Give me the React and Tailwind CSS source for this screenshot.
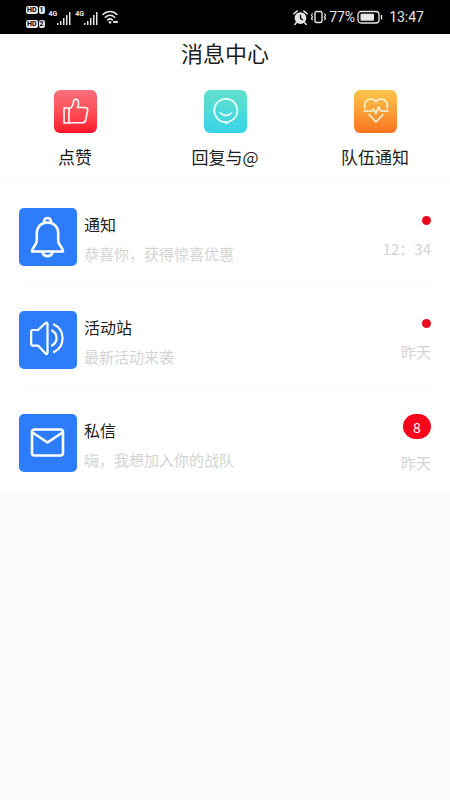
const ThumbIcon = () => (
  <svg viewBox="0 0 43 43" className="size-full" fill="none" stroke="#fff" strokeWidth="1.6" strokeLinejoin="round" strokeLinecap="round">
    <path d="M10 18h5v15h-5z" />
    <path d="M15 19c3-1.500 4.300-4 4.500-7.500c.1-3 4.600-3.200 5 .8c.2 2-.3 3.800-.9 5.200h7.200c2.200 0 3.200 1.300 2.800 3.200l-1.900 9.300c-.4 1.800-1.500 2.800-3.300 2.800H15" />
  </svg>
);

const SmileIcon = () => (
  <svg viewBox="0 0 43 43" className="size-full" fill="none" stroke="#e9fffd" strokeWidth="1.8" strokeLinejoin="round" strokeLinecap="round">
    <path d="M22 32a11.500 11.500 0 1 1 3.500-.6l-3.500 2.200z" />
    <path d="M16.500 23c3 3.200 8 3.200 11 0" />
  </svg>
);

const HeartIcon = () => (
  <svg viewBox="0 0 43 43" className="size-full" fill="none" stroke="#fff6dc" strokeWidth="1.6" strokeLinejoin="round" strokeLinecap="round">
    <path d="M11 18c-1.500-5 1.800-9 5.700-9c2.300 0 4.200 1 5.300 2.800c1.100-1.800 3-2.800 5.300-2.800c4 0 7.200 4 5.700 9" />
    <path d="M10 21h8l1.500-2l2.500 4.500l2.500-6.500l2 4h7.500" />
    <path d="M15 24.500l7 7.500l7-7.500" />
  </svg>
);

const BellIcon = () => (
  <svg viewBox="0 0 58 58" className="size-full" fill="none" stroke="#fff" strokeWidth="2.600" strokeLinejoin="round" strokeLinecap="round">
    <path d="M25 14.500v-1a3.500 3.500 0 0 1 7 0v1" />
    <path d="M28.500 14.500c-6.700 0-10.700 4.700-10.700 11v7c0 4.500-4.800 7-4.800 11h31c0-4-4.800-6.500-4.800-11v-7c0-6.300-4-11-10.700-11z" />
    <path d="M23.500 44c.8 5.500 9.200 5.500 10 0" />
  </svg>
);

const SpeakerIcon = () => (
  <svg viewBox="0 0 58 58" className="size-full" fill="none" stroke="#fff" strokeWidth="2.200" strokeLinejoin="round" strokeLinecap="round">
    <path d="M13.500 19h5.500l7.500-7c1-.8 2-.4 2 .8v29c0 1.200-1 1.600-2 .8l-7.500-8h-5.500c-.8 0-1.300-.5-1.300-1.300v-13c0-.8.5-1.300 1.300-1.300z" />
    <path d="M33 19.500a8.500 8.500 0 0 1 0 15" />
    <path d="M35 13.500a15.300 15.300 0 0 1 0 27.500" />
  </svg>
);

const MailIcon = () => (
  <svg viewBox="0 0 58 58" className="size-full" fill="none" stroke="#fff" strokeWidth="2.600" strokeLinejoin="round" strokeLinecap="round">
    <rect x="13" y="15.500" width="31" height="26" rx="2.500" />
    <path d="M13.500 18.500l15 10l15-10" />
  </svg>
);

const Signal = () => (
  <span className="flex items-start">
    <span className="text-[7px] leading-[8px] font-bold">4G</span>
    <svg viewBox="0 0 14 14" className="mt-px size-[14px]" fill="#e5e5e5">
      <path d="M0 12h1.500v2H0zM3 10h1.500v4H3zM6 7h1.500v7H6zM9 4h1.500v10H9zM12 1h1.500v13H12z" />
    </svg>
  </span>
);

const SimTag = ({ n }) => (
  <span className="flex gap-px text-[7px] leading-[8px] font-bold text-black">
    <span className="rounded-xs bg-neutral-200 px-px">HD</span>
    <span className="rounded-xs bg-neutral-200 px-px">{n}</span>
  </span>
);

const StatusBar = () => (
  <div className="flex h-[34px] items-center justify-between bg-black px-[26px] font-[Roboto,sans-serif] text-neutral-200">
    <div className="flex items-center gap-1">
      <div className="flex flex-col gap-[6px]">
        <SimTag n="1" />
        <SimTag n="2" />
      </div>
      <div className="flex items-center gap-1">
        <Signal />
        <Signal />
        <svg viewBox="0 0 16 14" className="h-[14px] w-4" fill="none" stroke="#e5e5e5" strokeWidth="1.600" strokeLinecap="round">
          <path d="M1 4.500c4-4 10-4 14 0M3.300 7.300c2.800-2.800 6.600-2.800 9.400 0M5.600 10c1.500-1.500 3.300-1.500 4.800 0" />
          <circle cx="8" cy="12.300" r=".6" fill="#e5e5e5" />
          <path d="M12 12h3" strokeWidth="2" />
        </svg>
      </div>
    </div>

    <div className="flex items-center gap-0.5 text-[14px] leading-5">
      <svg viewBox="0 0 14 14" className="size-[15px]">
        <circle cx="7" cy="7.500" r="5.500" fill="#e5e5e5" />
        <path d="M.8 3.500l3-2.500M13.200 3.500l-3-2.500M3 12l-1.200 1.500M11 12l1.200 1.500" stroke="#e5e5e5" strokeWidth="1.500" strokeLinecap="round" />
        <path d="M7 4.500v3.300l2.200 1.500" fill="none" stroke="#000" strokeWidth="1.200" />
      </svg>
      <svg viewBox="0 0 17 14" className="h-[14px] w-[17px]" fill="none" stroke="#e5e5e5" strokeWidth="1.400">
        <rect x="5" y="1.500" width="7" height="11" rx="1.500" />
        <path d="M2.500 3.500l-1 1.700l1 1.700l-1 1.700l1 1.700M14.500 3.500l1 1.700l-1 1.700l1 1.700l-1 1.700" strokeWidth="1.200" />
      </svg>
      <span>77%</span>
      <svg viewBox="0 0 26 14" className="h-[14px] w-[26px]">
        <rect x="1" y="1.500" width="21" height="11.500" rx="3" fill="none" stroke="#e5e5e5" strokeWidth="1.300" />
        <rect x="3.500" y="3.800" width="13.500" height="7" rx="1" fill="#e5e5e5" />
        <path d="M24.500 5v4.500" stroke="#e5e5e5" strokeWidth="1.400" />
      </svg>
      <span className="ml-1">13:47</span>
    </div>
  </div>
);

const shortcuts = [
  { label: '点赞', Icon: ThumbIcon, bg: 'bg-linear-to-b from-[#fb6f7c] to-[#fd0b28]' },
  { label: '回复与@', Icon: SmileIcon, bg: 'bg-linear-to-b from-[#62e0cb] to-[#35d3e8]' },
  { label: '队伍通知', Icon: HeartIcon, bg: 'bg-linear-to-b from-[#f9c64c] to-[#fa7320]' },
];

const messages = [
  { title: '通知', text: '恭喜你，获得惊喜优惠', time: '12：34', Icon: BellIcon },
  { title: '活动站', text: '最新活动来袭', time: '昨天', Icon: SpeakerIcon },
  { title: '私信', text: '嗨，我想加入你的战队', time: '昨天', Icon: MailIcon, count: 8 },
];

const MessageRow = ({ title, text, time, Icon, count }) => (
  <li className="border-b border-[#f9f9f9] last:border-white">
    <a href="#" className="flex gap-[7px] pt-[26px] pb-[18px]">
      <span className="size-[58px] shrink-0 rounded-[5px] bg-[#2d7dfa]">
        <Icon />
      </span>
      <span className="flex min-w-0 flex-1 flex-col gap-2 pt-1">
        <span className="text-[16px] leading-6 text-[#1c1c1c]">{title}</span>
        <span className="truncate text-[15px] leading-5 text-[#d3d3d3]">{text}</span>
      </span>
      <span className="flex h-[58px] shrink-0 flex-col items-end gap-[14px]">
        {count ? (
          <span className="flex h-[25px] w-7 shrink-0 items-center justify-center rounded-full bg-[#f5061d] text-[14px] leading-5 text-white">
            {count}
          </span>
        ) : (
          <span className="mt-2 size-[9px] shrink-0 rounded-full bg-[#e60c1e]" />
        )}
        <span className="text-[15px] leading-5 text-[#d3d3d3]">{time}</span>
      </span>
    </a>
  </li>
);

export default function App() {
  return (
    <div className="min-h-screen bg-[#fafafa] font-['Noto_Sans_CJK_SC',sans-serif]">
      <StatusBar />
      <main className="bg-white">
        <h1 className="text-center text-[22px] leading-9 text-[#1c1c1c]">消息中心</h1>

        {/* Accesos */}
        <div className="grid grid-cols-3 border-b border-[#f9f9f9] pt-5 pb-3">
          {shortcuts.map(({ label, Icon, bg }) => (
            <button key={label} type="button" className="flex flex-col items-center gap-3">
              <span className={`size-[43px] rounded-md ${bg}`}>
                <Icon />
              </span>
              <span className="text-[17px] leading-6 text-[#1c1c1c]">{label}</span>
            </button>
          ))}
        </div>

        <ul className="px-[19px]">
          {messages.map((m) => (
            <MessageRow key={m.title} {...m} />
          ))}
        </ul>
      </main>
    </div>
  );
}
